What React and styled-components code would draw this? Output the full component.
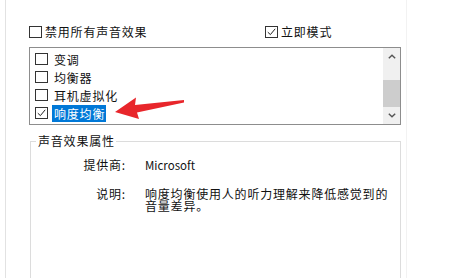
import React from "react";
import styled, { createGlobalStyle } from "styled-components";

const GlobalStyle = createGlobalStyle`
  body {
    margin: 0;
    background: #fff;
    font-family: "Noto Sans CJK SC", "Noto Sans", sans-serif;
    color: #111;
  }
`;

const effects = [
  { label: "变调", checked: false },
  { label: "均衡器", checked: false },
  { label: "耳机虚拟化", checked: false },
  { label: "响度均衡", checked: true, selected: true },
];

const Page = styled.div`
  position: relative;
  width: 450px;
  height: 278px;
  overflow: hidden;
  padding-left: 5px;
  box-sizing: border-box;
`;

const Panel = styled.div`
  width: 402px;
  height: 100%;
  box-sizing: border-box;
  border-left: 1px solid #e2e2e2;
  border-right: 1px solid #f2f2f2;
  padding: 26px 0 0 23px;
  display: flex;
  flex-direction: column;
`;

const TopRow = styled.div`
  display: grid;
  grid-template-columns: 236px auto;
  height: 12px;
  align-items: center;
`;

const Option = styled.label`
  display: flex;
  align-items: center;
  gap: 3px;
  font-size: 12px;
  letter-spacing: 0.8px;
  line-height: 12px;
  white-space: nowrap;
`;

const Box = styled.span`
  width: 11px;
  height: 10px;
  flex: none;
  border: 1px solid #333;
  background: #fff;
  display: flex;
  align-items: center;
  justify-content: center;
`;

const ListBox = styled.div`
  margin-top: 9px;
  width: 372px;
  height: 80px;
  box-sizing: border-box;
  border: 1px solid #8d8d8d;
  display: flex;
`;

const Items = styled.div`
  flex: 1;
  padding-top: 2px;
`;

const Item = styled.div`
  height: 18px;
  display: flex;
  align-items: center;
  padding-left: 5px;
  gap: 4px;
`;

const ItemText = styled.span`
  font-size: 12px;
  letter-spacing: 0.8px;
  line-height: 17px;
  padding: 0 1px 0 2px;
  background: ${(p) => (p.$selected ? "#0078d7" : "transparent")};
  color: ${(p) => (p.$selected ? "#fff" : "#111")};
`;

const ScrollBar = styled.div`
  width: 17px;
  background: #f0f0f0;
  display: flex;
  flex-direction: column;
`;

const ScrollButton = styled.div`
  height: 17px;
  display: flex;
  align-items: center;
  justify-content: center;
`;

const Track = styled.div`
  flex: 1;
  padding-top: 15px;
`;

const Thumb = styled.div`
  height: 27px;
  background: #cdcdcd;
`;

const Group = styled.fieldset`
  margin: 10px 0 0 1px;
  padding: 0;
  width: 371px;
  height: 160px;
  box-sizing: border-box;
  border: 1px solid #dcdcdc;
  border-bottom: none;
`;

const Legend = styled.legend`
  margin-left: 5px;
  padding: 0 1px 0 2px;
  font-size: 12px;
  letter-spacing: 0.8px;
  line-height: 12px;
`;

const Props = styled.div`
  margin-top: 12px;
  display: grid;
  grid-template-columns: 95px 250px;
  column-gap: 19px;
  row-gap: 17px;
  align-items: start;
`;

const Key = styled.div`
  text-align: right;
  font-size: 12px;
  letter-spacing: 0.8px;
  line-height: 12px;
`;

const Value = styled.div`
  font-size: ${(p) => (p.$latin ? "11.5px" : "12px")};
  letter-spacing: ${(p) => (p.$latin ? "0" : "0.8px")};
  line-height: 12px;
`;

const Overlay = styled.svg`
  position: absolute;
  left: 0;
  top: 0;
  pointer-events: none;
`;

const Check = () => (
  <svg width="9" height="8" viewBox="0 0 9 8">
    <path d="M0.8 4.2 L3.4 6.6 L8.2 0.8" fill="none" stroke="#222" strokeWidth="1" />
  </svg>
);

const CheckBox = ({ checked }) => <Box>{checked && <Check />}</Box>;

const Chevron = ({ up }) => (
  <svg width="8" height="5" viewBox="0 0 8 5">
    <path
      d={up ? "M0.8 4.3 L4 1.2 L7.2 4.3" : "M0.8 0.7 L4 3.8 L7.2 0.7"}
      fill="none"
      stroke="#555"
      strokeWidth="1.4"
    />
  </svg>
);

export default function App() {
  return (
    <Page>
      <GlobalStyle />
      <Panel>
        <TopRow>
          <Option>
            <CheckBox />
            禁用所有声音效果
          </Option>
          <Option>
            <CheckBox checked />
            立即模式
          </Option>
        </TopRow>

        <ListBox>
          <Items>
            {effects.map((e) => (
              <Item key={e.label}>
                <CheckBox checked={e.checked} />
                <ItemText $selected={e.selected}>{e.label}</ItemText>
              </Item>
            ))}
          </Items>
          <ScrollBar>
            <ScrollButton>
              <Chevron up />
            </ScrollButton>
            <Track>
              <Thumb />
            </Track>
            <ScrollButton>
              <Chevron />
            </ScrollButton>
          </ScrollBar>
        </ListBox>

        <Group>
          <Legend>声音效果属性</Legend>
          <Props>
            <Key>提供商:</Key>
            <Value $latin>Microsoft</Value>
            <Key>说明:</Key>
            <Value>响度均衡使用人的听力理解来降低感觉到的音量差异。</Value>
          </Props>
        </Group>
      </Panel>

      <Overlay width="450" height="278" viewBox="0 0 450 278">
        <polygon
          points="115,112 136,97.5 135,105 184,100 184,102.5 137,112.5 139,119"
          fill="#e8262b"
        />
      </Overlay>
    </Page>
  );
}
